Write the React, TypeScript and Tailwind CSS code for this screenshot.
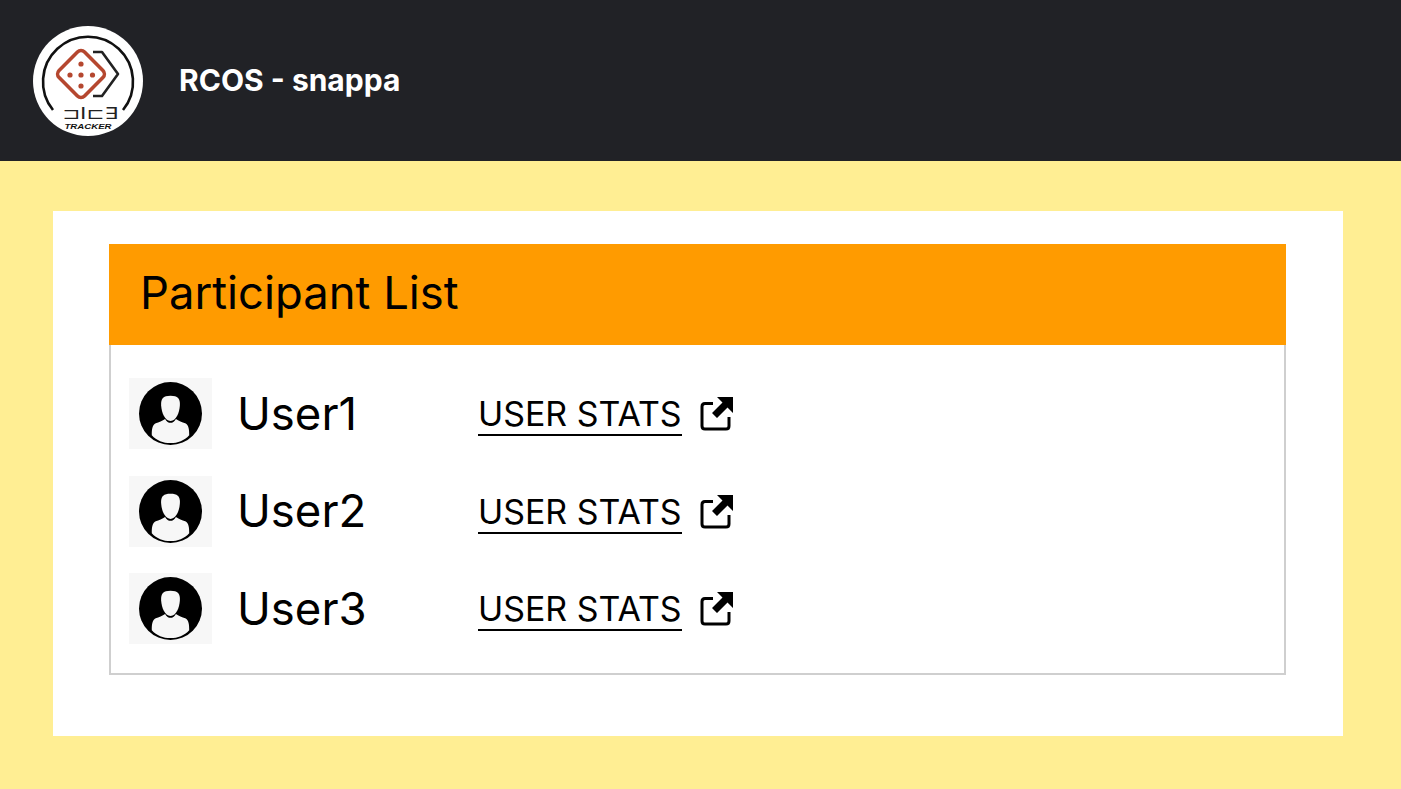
import React from 'react';

const USERS = ['User1', 'User2', 'User3'];

const Logo: React.FC = () => (
  <svg viewBox="0 0 110 110" className="w-[110px] h-[110px] shrink-0">
    <circle cx="55" cy="55" r="55" fill="#fff" />
    <path d="M20 84 A 45 45 0 1 1 90 84" fill="none" stroke="#111" strokeWidth="2.6" />
    <path d="M60 26 L69 26 L85 48 L69 70 L60 70" fill="none" stroke="#222" strokeWidth="2.6" strokeLinejoin="round" />
    <rect x="30" y="30" width="36" height="36" rx="5" transform="rotate(45 48 48)" fill="#fff" stroke="#b5472f" strokeWidth="3.6" />
    <g fill="#b5472f">
      <circle cx="48" cy="38" r="2.6" />
      <circle cx="37" cy="49" r="2.6" />
      <circle cx="48" cy="49" r="2.6" />
      <circle cx="59.500" cy="49" r="2.6" />
      <circle cx="48" cy="60" r="2.6" />
    </g>
    <text x="57" y="93" textAnchor="middle" textLength="56" lengthAdjust="spacingAndGlyphs" fontFamily="DejaVu Sans, sans-serif" fontSize="16" fill="#222">⊐I⊏∃</text>
    <text x="55" y="103" textAnchor="middle" textLength="47" lengthAdjust="spacingAndGlyphs" fontFamily="Liberation Sans, sans-serif" fontSize="8" fontWeight="700" fontStyle="italic" fill="#111">TRACKER</text>
  </svg>
);

const Avatar: React.FC = () => (
  <div className="w-[83px] h-[71px] bg-[#f7f7f7] flex items-center justify-center shrink-0">
    <svg viewBox="0 0 64 64" className="w-[63px] h-[63px]">
      <circle cx="32" cy="32" r="32" fill="#000" />
      <path d="M32 14 C24.500 14 22 17 22.500 24 C23 31 26 39 32 39.500 C38 39 41 31 41.500 24 C42 17 39.500 14 32 14 Z" fill="#f7f7f7" />
      <path d="M13 54 C13 48 13.500 44 17 42 C20 40.500 24 39.500 26.500 37.500 C28 40 30 41.500 32 41.500 C34 41.500 36 40 37.500 37.500 C40 39.500 44 40.500 47 42 C50.500 44 51 48 51 54 C46 59.500 39.500 62 32 62 C24.500 62 18 59.500 13 54 Z" fill="#f7f7f7" />
    </svg>
  </div>
);

const ExternalIcon: React.FC = () => (
  <svg viewBox="0 0 33 34" className="w-[33px] h-[34px] shrink-0">
    <path d="M13 6.500 H5 Q2 6.500 2 9.500 V29 Q2 32 5 32 H26 Q29 32 29 29 V20" fill="none" stroke="#000" strokeWidth="3" />
    <path d="M17 0 H33 V16 L27.500 10.500 L17 21 L12 16 L22.500 5.500 Z" fill="#000" />
  </svg>
);

const UserRow: React.FC<{ name: string }> = ({ name }) => (
  <div className="flex items-center h-[71px]">
    <Avatar />
    <span className="ml-[25px] w-[241px] text-[45.5px] leading-none text-black">{name}</span>
    <a href="#" className="mt-[2px] w-[204px] border-b-2 border-black text-[33.9px] leading-[42px] h-[43px] text-black whitespace-nowrap">
      USER STATS
    </a>
    <span className="ml-[18px] mt-[1px]">
      <ExternalIcon />
    </span>
  </div>
);

export default function App() {
  return (
    <div className="min-h-[789px] bg-[#ffee93] font-['Inter',sans-serif]">
      <header className="h-[161px] bg-[#212226] flex items-center pl-[33px]">
        <Logo />
        <h1 className="ml-[36px] text-[30px] font-bold text-white">RCOS - snappa</h1>
      </header>
      <main className="pt-[50px] pl-[53px] pr-[58px]">
        <div className="bg-white h-[525px] pt-[33px] pl-[56px] pr-[57px]">
          <div className="bg-[#ff9b00] h-[101px] flex items-center pl-[31px] pb-[3px]">
            <h2 className="text-[45.4px] leading-none text-black">Participant List</h2>
          </div>
          <div className="border-2 border-t-0 border-[#cfcfcf] pt-[33px] pb-[29px] pl-[18px] flex flex-col gap-[26.5px]">
            {USERS.map((u) => (
              <UserRow key={u} name={u} />
            ))}
          </div>
        </div>
      </main>
    </div>
  );
}
